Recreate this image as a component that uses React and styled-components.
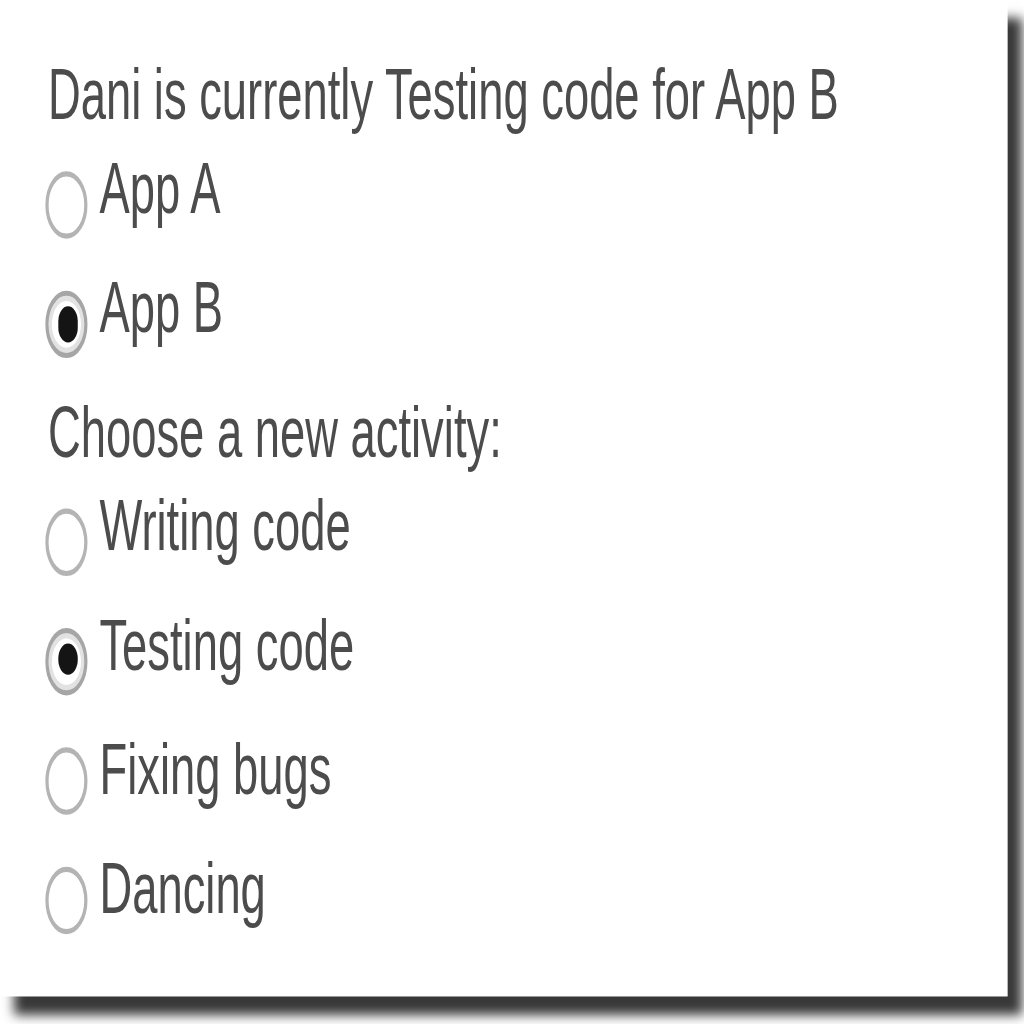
import styled, { createGlobalStyle } from "styled-components";

// the source screenshot was stretched: draw it at its real size, then scale it up
const SCALE_X = 3.24;
const SCALE_Y = 5.19;

const GlobalStyle = createGlobalStyle`
  html, body {
    margin: 0;
    padding: 0;
    background: #ffffff;
  }
`;

const Stage = styled.div`
  width: 1024px;
  height: 1024px;
  overflow: hidden;
  background: #ffffff;
`;

const Card = styled.form`
  box-sizing: border-box;
  width: 310.8px;
  height: 192.3px;
  padding: 10px 0 0 14.3px;
  background: #ffffff;
  box-shadow: 4.4px 3.5px 2.6px rgba(0, 0, 0, 0.78);
  transform: scale(${SCALE_X}, ${SCALE_Y});
  transform-origin: 0 0;
  font-family: "Liberation Sans", Arial, sans-serif;
  font-size: 14px;
  line-height: 16px;
  color: #4c4c4c;
`;

const Prompt = styled.p`
  margin: 0;
  height: 18.2px;
  padding-left: 0.5px;
  white-space: nowrap;
`;

const Option = styled.label`
  display: flex;
  align-items: flex-start;
  height: 23.3px;
  white-space: nowrap;
`;

const Radio = styled.input.attrs({ type: "radio" })`
  appearance: none;
  box-sizing: border-box;
  flex: none;
  width: 13px;
  height: 13px;
  margin: 4.6px 3.4px 0 0;
  border-radius: 50%;
  border: 1.1px solid #b4b4b4;
  background: #ffffff;
  display: grid;
  place-items: center;

  &:checked {
    border-color: #a6a6a6;
    box-shadow: inset 0 0 0 1px #e2e2e2;
  }

  &:checked::after {
    content: "";
    width: 6.4px;
    height: 6.2px;
    border-radius: 50%;
    background: #141414;
  }
`;

const appOptions = [
  { id: "a", label: "App A" },
  { id: "b", label: "App B" },
];

const activities = [
  { id: "writing", label: "Writing code" },
  { id: "testing", label: "Testing code" },
  { id: "fixing", label: "Fixing bugs" },
  { id: "dancing", label: "Dancing" },
];

function App() {
  return (
    <Stage>
      <GlobalStyle />
      <Card onSubmit={(e) => e.preventDefault()}>
        <Prompt>Dani is currently Testing code for App B</Prompt>
        {appOptions.map((opt) => (
          <Option key={opt.id}>
            <Radio name="app" defaultChecked={opt.id === "b"} />
            {opt.label}
          </Option>
        ))}
        <Prompt>Choose a new activity:</Prompt>
        {activities.map((opt) => (
          <Option key={opt.id}>
            <Radio name="activity" defaultChecked={opt.id === "testing"} />
            {opt.label}
          </Option>
        ))}
      </Card>
    </Stage>
  );
}

export default App;
